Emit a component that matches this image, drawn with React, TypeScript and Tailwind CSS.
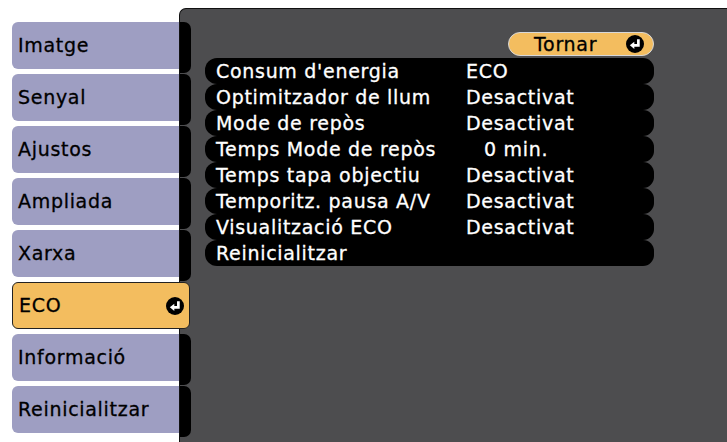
const tabs = ["Imatge", "Senyal", "Ajustos", "Ampliada", "Xarxa", "ECO", "Informació", "Reinicialitzar"];
const selected = 5;

const rows: Array<{ label: string; value: string; indent?: boolean }> = [
  { label: "Consum d'energia", value: "ECO" },
  { label: "Optimitzador de llum", value: "Desactivat" },
  { label: "Mode de repòs", value: "Desactivat" },
  { label: "Temps Mode de repòs", value: "0 min.", indent: true },
  { label: "Temps tapa objectiu", value: "Desactivat" },
  { label: "Temporitz. pausa A/V", value: "Desactivat" },
  { label: "Visualització ECO", value: "Desactivat" },
  { label: "Reinicialitzar", value: "" },
];

function EnterIcon({ className }: { className?: string }) {
  return (
    <svg viewBox="0 0 16 16" className={className}>
      <circle cx="8" cy="8" r="8" fill="#000" />
      <path d="M11 3.8 V9.2 H6.5" stroke="#fff" strokeWidth="2.4" fill="none" />
      <path d="M3.4 9.2 L7.4 6 L7.4 12.4 Z" fill="#fff" />
    </svg>
  );
}

export default function App() {
  return (
    <div
      className="flex h-[442px] w-[727px] overflow-hidden bg-white text-[19px] leading-none tracking-[0.7px] [-webkit-text-stroke:0.3px]"
      style={{ fontFamily: '"DejaVu Sans", "Liberation Sans", sans-serif' }}
    >
      {/* menu tabs */}
      <div className="relative z-10 flex w-[179px] shrink-0 flex-col gap-[5px] pl-[12px] pt-[22px]">
        {tabs.map((tab, i) =>
          i === selected ? (
            <div
              key={tab}
              className="-mr-[11px] flex h-[47px] items-center justify-between rounded-[6px] border border-[#222] bg-[#f3bd5f] pl-[6px] pr-[5px] text-black"
            >
              <span>{tab}</span>
              <EnterIcon className="h-[18px] w-[18px]" />
            </div>
          ) : (
            <div
              key={tab}
              className="flex h-[47px] items-center rounded-l-[6px] bg-[#9e9ec2] pl-[6px] text-black"
            >
              {tab}
            </div>
          ),
        )}
      </div>

      {/* main panel */}
      <div className="mt-[8px] flex h-[434px] flex-1 rounded-tl-[7px] border-l border-t border-[#111] bg-[#4d4d4f]">
        <div className="flex w-[11px] shrink-0 flex-col pt-[13px]">
          {tabs.map((tab, i) => (
            <div key={tab} className="h-[52px] pb-[1px]">
              {i === selected ? null : (
                <div className="h-full rounded-r-[7px] bg-black" />
              )}
            </div>
          ))}
        </div>

        <div className="flex flex-1 flex-col pl-[14px] pt-[23px]">
          <div className="flex w-[449px] justify-end">
            <div className="flex h-[24px] w-[146px] items-center justify-between rounded-full border border-[#d8d8d8] bg-[#f3bd5f] pl-[25px] pr-[9px] text-black">
              <span>Tornar</span>
              <EnterIcon className="h-[18px] w-[18px]" />
            </div>
          </div>
          <div className="mt-[2px] flex w-[449px] flex-col">
            {rows.map((row) => (
              <div
                key={row.label}
                className="flex h-[26px] items-center rounded-l-[12px] rounded-r-[11px] bg-black pl-[11px] text-white"
              >
                <span className="w-[250px] whitespace-nowrap">{row.label}</span>
                <span className={row.indent ? "pl-[18px]" : ""}>{row.value}</span>
              </div>
            ))}
          </div>
        </div>
      </div>
    </div>
  );
}
